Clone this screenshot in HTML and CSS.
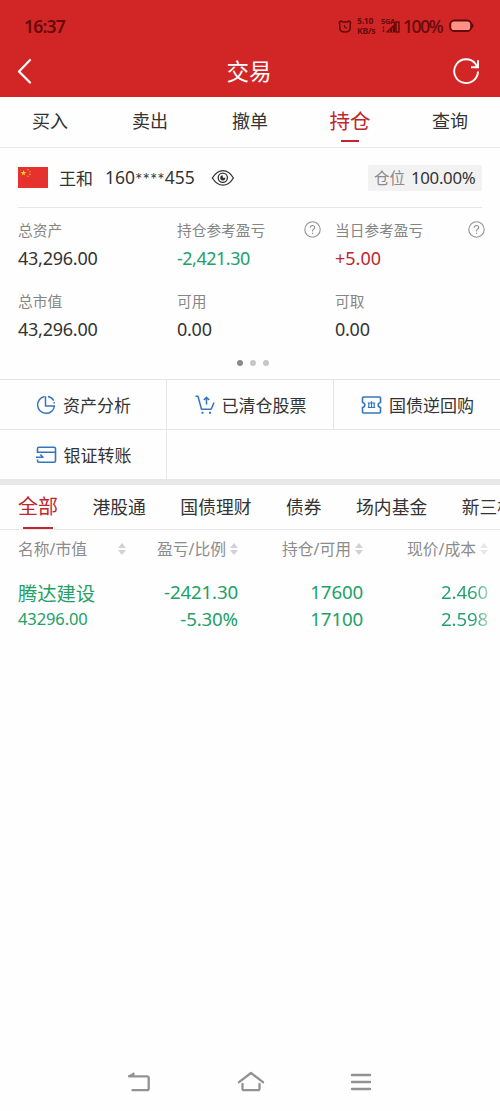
FILE: index.html
```html
<!DOCTYPE html>
<html lang="zh-CN">
<head>
<meta charset="utf-8">
<title>交易</title>
<link rel="stylesheet" href="styles.css">
</head>
<body>
<div class="screen">
  <header class="top">
    <div class="status">
      <span class="clock">16:37</span>
      <svg class="alarm" width="14" height="15" viewBox="0 0 14 15" fill="none" stroke="#650b0b" stroke-width="1.600" stroke-linecap="round" stroke-linejoin="round"><path d="M4.500 3H9.500Q10.800 1.600 12 2.600T12.200 5V9.500Q11.800 13 7 13T1.800 9.500V5Q.8 3.600 2 2.600T4.500 3Z"/><path d="M6.300 6.500L7 8.500L8.500 8.800" stroke-width="1.200"/></svg>
      <span class="speed"><span>5.10</span><span>KB/s</span></span>
      <span class="network">
        <svg width="20" height="16" viewBox="0 0 20 16" fill="none" stroke="#650b0b"><path d="M5.500 14L14 6V14Z" fill="#650b0b" stroke-width="1"/><path d="M15 4H18V14H15Z" stroke-width="1.400"/><path d="M8.500 14V12M11.500 14V10" stroke="#d22526" stroke-width=".7"/><path d="M2.500 8.500V10.500M2.500 11.500V14" stroke-width="1.300"/></svg>
        <span class="net-label">5GA</span>
      </span>
      <span class="percent">100%</span>
      <svg class="battery" width="25" height="14" viewBox="0 0 25 14"><rect x="1.200" y="1.400" width="21" height="10.700" rx="4.200" fill="#ff9186" stroke="#650b0b" stroke-width="2"/><path d="M23 4.500Q24.500 4.500 24.500 6.800T23 9Z" fill="#650b0b"/></svg>
    </div>
    <div class="titlebar">
      <svg width="16" height="26" viewBox="0 0 16 26" fill="none" stroke="#fff" stroke-width="2.200" stroke-linecap="round" stroke-linejoin="round"><path d="M14 2L3 13.500L14 24.500"/></svg>
      <h1>交易</h1>
      <svg width="28" height="28" viewBox="0 0 28 28" fill="none" stroke="#fff" stroke-width="1.900"><path d="M26 14.500A11.900 11.900 0 1 1 23.600 7L25.200 10.300M19 10.300H26V3.200"/></svg>
    </div>
  </header>

  <nav class="tabs">
    <span>买入</span><span>卖出</span><span>撤单</span><span class="on">持仓</span><span>查询</span>
  </nav>

  <section class="account">
    <svg class="flag" width="30" height="21" viewBox="0 0 30 21"><rect width="30" height="21" fill="#e5322f"/><path fill="#f8cf26" d="M5.500 3L6.200 5.100H8.400L6.600 6.400L7.300 8.500L5.500 7.200L3.700 8.500L4.400 6.400L2.600 5.100H4.800Z"/><g fill="#eda02b"><circle cx="10" cy="2.700" r=".8"/><circle cx="12" cy="4.800" r=".8"/><circle cx="12" cy="7.400" r=".8"/><circle cx="10" cy="9.300" r=".8"/></g></svg>
    <span class="name">王和</span>
    <span class="number">160<i>****</i>455</span>
    <svg class="eye" width="24" height="18" viewBox="0 0 24 18" fill="none" stroke="#333" stroke-width="1.300"><path d="M1.300 9Q6 1.700 12 1.700T22.400 9Q18 16.200 12 16.200T1.300 9Z"/><circle cx="11.800" cy="8.800" r="4.600"/><path d="M11.800 6.200A2.600 2.600 0 1 0 14.400 8.800H11.800Z" fill="#333" stroke="none"/></svg>
    <span class="ratio">仓位<b>100.00%</b></span>
  </section>

  <section class="summary">
    <div class="stat"><label>总资产</label><b>43,296.00</b></div>
    <div class="stat"><label>持仓参考盈亏<svg class="q" width="17" height="17" viewBox="0 0 17 17" fill="none" stroke="#919191" stroke-width="1.100"><circle cx="8.500" cy="8.500" r="7.700"/><path d="M6.200 6.700Q6.300 4.500 8.500 4.500T10.700 6.500Q10.700 7.600 9.500 8.300T8.500 10.500M8.500 11.800V13"/></svg></label><b class="down">-2,421.30</b></div>
    <div class="stat"><label>当日参考盈亏<svg class="q" width="17" height="17" viewBox="0 0 17 17" fill="none" stroke="#919191" stroke-width="1.100"><circle cx="8.500" cy="8.500" r="7.700"/><path d="M6.200 6.700Q6.300 4.500 8.500 4.500T10.700 6.500Q10.700 7.600 9.500 8.300T8.500 10.500M8.500 11.800V13"/></svg></label><b class="up">+5.00</b></div>
    <div class="stat"><label>总市值</label><b>43,296.00</b></div>
    <div class="stat"><label>可用</label><b>0.00</b></div>
    <div class="stat"><label>可取</label><b>0.00</b></div>
  </section>
  <div class="dots"><i class="on"></i><i></i><i></i></div>

  <section class="actions">
    <div><svg width="20" height="20" viewBox="0 0 20 20" fill="none" stroke="#3475bd" stroke-width="1.500" stroke-linejoin="round"><path d="M8.500 1.500A8.500 8.500 0 1 0 18.500 11H9.500V1.200M12 1.500Q15.700 2.200 17.800 5.700M18.200 7V8.500"/></svg><span>资产分析</span></div>
    <div><svg width="20" height="20" viewBox="0 0 20 20" fill="none" stroke="#3475bd" stroke-width="1.500" stroke-linejoin="round"><path d="M.5 1.300H3L6.500 14.300H16.200L19 7.500M11.500 9.500V2.700M8.800 5L11.500 2.300L14.200 5"/><path d="M6.500 17.800H8.500M14 17.800H16" stroke-width="2"/></svg><span>已清仓股票</span></div>
    <div><svg width="21" height="20" viewBox="0 0 21 20" fill="none" stroke="#3475bd" stroke-width="1.600" stroke-linejoin="round"><path d="M2.500 2H18.500Q19.500 2 19.500 3V7.500Q17.200 8 17.200 10T19.500 12.500V17Q19.500 18 18.500 18H2.500Q1.500 18 1.500 17V12.500Q3.800 12 3.800 10T1.500 7.500V3Q1.500 2 2.500 2Z"/><path d="M6.800 8H14.200M10.500 6.300V8M7.800 8V12.300M10.500 8V12.300M13.200 8V12.300M6.800 12.500H14.200" stroke-width="1.200"/></svg><span>国债逆回购</span></div>
    <div><svg width="21" height="18" viewBox="0 0 21 18" fill="none" stroke="#3475bd" stroke-width="1.600" stroke-linejoin="round"><path d="M1.500 7V2.800Q1.500 1.300 3 1.300H18Q19.500 1.300 19.500 2.800V14.700Q19.500 16.200 18 16.200H3Q1.500 16.200 1.500 14.700V13.500M1.500 6.300H19.500M0 11.300H7L4.300 8.500"/></svg><span>银证转账</span></div>
    <div class="blank"></div>
  </section>

  <nav class="kinds">
    <span class="on">全部</span><span>港股通</span><span>国债理财</span><span>债券</span><span>场内基金</span><span>新三板</span>
  </nav>

  <section class="table">
    <div class="row head">
      <span>名称/市值<i class="sort"></i></span><span>盈亏/比例<i class="sort"></i></span><span>持仓/可用<i class="sort"></i></span><span>现价/成本<i class="sort faint"></i></span>
    </div>
    <div class="row data">
      <span class="stock">腾达建设<small>43296.00</small></span>
      <span>-2421.30<br>-5.30%</span>
      <span>17600<br>17100</span>
      <span class="fade">2.460<br>2.598</span>
    </div>
  </section>

  <footer class="system">
    <svg width="24" height="22" viewBox="0 0 24 22" fill="none" stroke="#929292" stroke-width="2.300" stroke-linecap="round" stroke-linejoin="round"><path d="M2 5.300H20Q21.700 5.300 21.700 7V17.500Q21.700 19.200 20 19.200H5.500"/><path d="M1.500 5L7 1.800V5Z" fill="#929292" stroke-width="1"/></svg>
    <svg width="28" height="22" viewBox="0 0 28 22" fill="none" stroke="#929292" stroke-width="2.300" stroke-linecap="round" stroke-linejoin="round"><path d="M2 11.200L14 2L26 11.200M5.500 13V17.500Q5.500 19.200 7.200 19.200H20.800Q22.500 19.200 22.500 17.500V13"/></svg>
    <svg width="22" height="18" viewBox="0 0 22 18" stroke="#929292" stroke-width="2.400" stroke-linecap="round"><path d="M2 2H20M2 9H20M2 16H20"/></svg>
  </footer>
</div>
</body>
</html>
```
FILE: styles.css
```css
* { box-sizing: border-box; }
body { margin: 0; background: #fefefe; color: #333; font-family: "Noto Sans", "Noto Sans CJK SC", sans-serif; }
svg { flex: none; display: block; }
b, i, h1 { font-weight: 400; font-style: normal; }
.screen { width: 500px; height: 1111px; overflow: hidden; display: flex; flex-direction: column; }
.screen > * { flex: none; }

.top { height: 97px; background: #d22526; }
.status { height: 46px; padding: 6px 26px 0 24px; display: flex; align-items: center; color: #650b0b; }
.clock { font: 600 17.500px/20px "Noto Sans", sans-serif; letter-spacing: -.8px; margin-right: auto; }
.speed { display: flex; flex-direction: column; width: 20px; margin-left: 5px; font: 700 8.500px/10px "Noto Sans", sans-serif; letter-spacing: -.2px; white-space: nowrap; }
.network { position: relative; margin-left: 4px; height: 17px; }
.net-label { position: absolute; left: 0; top: -1px; font: 700 7.500px/8px "Noto Sans", sans-serif; letter-spacing: -.4px; }
.percent { font: 500 17.500px/20px "Noto Sans", sans-serif; margin-left: 2px; width: 40px; letter-spacing: -1.4px; }
.battery { margin-left: 6px; }
.titlebar { height: 50px; padding: 0 20px 0 16px; display: flex; align-items: center; justify-content: space-between; color: #fff; }
h1 { margin: 1px 0 0 14px; font-size: 22.500px; line-height: 30px; }

.tabs { height: 51px; display: grid; grid-template-columns: repeat(5, 1fr); border-bottom: 1px solid #e9e9e9; text-align: center; font-size: 18px; line-height: 48px; }
.on { color: #bf262e; }
.tabs .on { font-size: 20.500px; }
.tabs .on::after { content: ""; display: block; width: 18px; height: 2px; margin: -5px auto 0; background: #bf262e; }

.account { height: 60px; margin: 0 18px; border-bottom: 1px solid #e6e6e6; display: flex; align-items: center; font-size: 17px; }
.flag { margin-top: -1px; }
.name { margin-left: 11px; }
.number { margin-left: 12px; width: 91px; font-size: 17.500px; display: flex; }
.number i { padding-top: 4px; font-family: Lato, sans-serif; }
.eye { margin-left: 15px; }
.ratio { margin-left: auto; height: 26px; width: 114px; padding-left: 6px; background: #f2f2f2; border-radius: 2px; font-size: 15.500px; line-height: 26px; color: #8a8a8a; white-space: nowrap; }
.ratio b { display: inline-block; margin-left: 6px; font-size: 16.800px; letter-spacing: -.3px; color: #333; }

.summary { height: 145px; padding: 11px 0 0 18px; display: grid; grid-template-columns: 159px 158px 165px; grid-auto-rows: 71px; }
.stat label { display: flex; align-items: center; height: 22px; font-size: 14.700px; line-height: 20px; padding-bottom: 1px; color: #858585; }
.stat b { display: block; font-size: 18px; line-height: 34px; letter-spacing: -.25px; }
.q { margin-left: auto; margin-right: 14px; }
.stat:nth-child(3) .q { margin-right: 15px; }
.stat .down { color: #22a068; letter-spacing: -.5px; }
.stat .up { color: #bf262e; letter-spacing: 0; }
.dots { height: 26px; padding-top: 7px; display: flex; justify-content: center; gap: 7px; margin-left: 6px; }
.dots i { width: 6px; height: 6px; border-radius: 50%; background: #c6c6c6; }
.dots .on { background: #8b8b8b; }

.actions { height: 106px; display: grid; grid-template-columns: 167px 167px 166px; grid-template-rows: 50px 49px; border-top: 1px solid #e3e3e3; border-bottom: 6px solid #e7e7e7; }
.actions div { display: flex; align-items: center; justify-content: center; gap: 7px; padding-left: 1px; font-size: 17px; border-right: 1px solid #e6e6e6; border-bottom: 1px solid #e6e6e6; }
.actions div:nth-child(n+4) { border-bottom: 0; }
.actions div:nth-child(3) { border-right: 0; }
.actions .blank { grid-column: 2 / 4; border-right: 0; }

.kinds { height: 45px; padding-left: 18px; display: flex; gap: 34.500px; white-space: nowrap; overflow: hidden; font-size: 17.800px; line-height: 44px; border-bottom: 1px solid #e8e8e8; }
.kinds .on { font-size: 20px; }
.kinds .on::after { content: ""; display: block; width: 30px; height: 2px; margin: -2px auto 0; background: #bf262e; }

.row { display: grid; grid-template-columns: 108px 112px 125px 125px; padding-left: 18px; text-align: right; }
.head { height: 37px; font-size: 15.800px; color: #8c8c8c; }
.head span { display: flex; align-items: center; justify-content: flex-end; white-space: nowrap; }
.head span:first-child { justify-content: space-between; }
.sort { width: 8px; height: 12px; margin-left: 4px; display: flex; flex-direction: column; justify-content: space-between; }
.sort::before, .sort::after { content: ""; border: 4px solid transparent; border-top: 0; border-bottom: 5px solid #d2d2d2; }
.sort::after { border-bottom: 0; border-top: 5px solid #d2d2d2; }
.faint { opacity: .5; }
.data { padding-top: 11px; color: #22a068; font-size: 18.700px; line-height: 27px; letter-spacing: -.15px; white-space: nowrap; }
.stock { text-align: left; padding-top: 2px; font-size: 19.300px; letter-spacing: 0; }
.stock small { display: block; font-size: 16.500px; line-height: 24px; letter-spacing: -.1px; }
.fade { background: linear-gradient(90deg, #22a068 88%, #a5d7c0); background-clip: text; color: transparent; }

.system { margin-top: auto; height: 60px; padding: 2px 128px 0 127px; display: flex; align-items: center; justify-content: space-between; }
```
